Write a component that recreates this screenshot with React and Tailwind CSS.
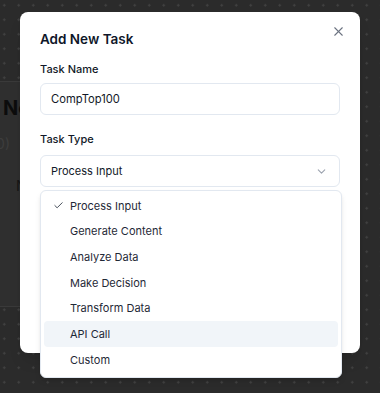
import React from 'react';
import { X, ChevronDown, Check } from 'lucide-react';

const types = ['Process Input', 'Generate Content', 'Analyze Data', 'Make Decision', 'Transform Data', 'API Call', 'Custom'];

export default function App() {
  return (
    <div className="relative w-[380px] h-[393px] overflow-hidden bg-[#2b2b2b] bg-[radial-gradient(#424242_1px,transparent_1.2px)] bg-[size:14.5px_14.5px] bg-[position:-3px_-2px] font-['Inter',sans-serif]">
      {/* dimmed page behind the dialog */}
      <div className="mt-[81px] h-[226px] w-[352px] bg-[#2f2f2f] border-y border-[#3a3a3a] flex flex-col">
        <div className="mt-[14px] ml-[3px] text-[20px] font-bold text-[#0c0c0c] leading-[24px]">New Task</div>
        <div className="mt-[14px] -ml-[9px] text-[14px] text-[#3d3d3d] leading-[20px]">(0)</div>
        <div className="mt-[22px] ml-[16px] text-[14px] text-[#161616] leading-[20px]">Name</div>
      </div>

      {/* dialog */}
      <div className="absolute left-[20px] top-[12px] w-[340px] h-[341px] bg-white rounded-lg shadow-lg px-5 pt-[17px]">
        <button className="absolute right-[14px] top-[12px] text-[#6b7280]">
          <X size={15} strokeWidth={1.7} className="block" />
        </button>
        <h2 className="text-[13.5px] font-semibold leading-[20px] text-[#0f172a]">Add New Task</h2>
        <label className="block mt-[10px] text-[11px] font-medium leading-[20px] text-[#111827]">Task Name</label>
        <div className="mt-[4px] h-[32px] rounded-md border border-[#e2e8f0] pl-[10px] flex items-center text-[11.2px] text-[#111827]">
          CompTop100
        </div>
        <label className="block mt-[14px] text-[11px] font-medium leading-[20px] text-[#111827]">Task Type</label>
        <div className="mt-[6px] h-[32px] rounded-md border border-[#e2e8f0] pl-[10px] pr-[11px] flex items-center justify-between text-[11px] text-[#111827]">
          <span>Process Input</span>
          <ChevronDown size={13} className="text-[#9ca3af]" />
        </div>
      </div>

      {/* open select menu */}
      <div className="absolute left-[40px] top-[190px] w-[302px] bg-white rounded-md border border-[#e2e8f0] shadow-md px-[3px] pt-[2px] pb-[4px]">
        {types.map((t) => (
          <div
            key={t}
            className={
              'relative h-[25.7px] flex items-center pl-[26px] rounded-sm text-[11px] text-[#1f2937] ' +
              (t === 'API Call' ? 'bg-[#f1f5f9]' : '')
            }
          >
            {t === 'Process Input' && (
              <Check size={11} strokeWidth={1.8} className="absolute left-[9px] text-[#1f2937]" />
            )}
            {t}
          </div>
        ))}
      </div>
    </div>
  );
}
